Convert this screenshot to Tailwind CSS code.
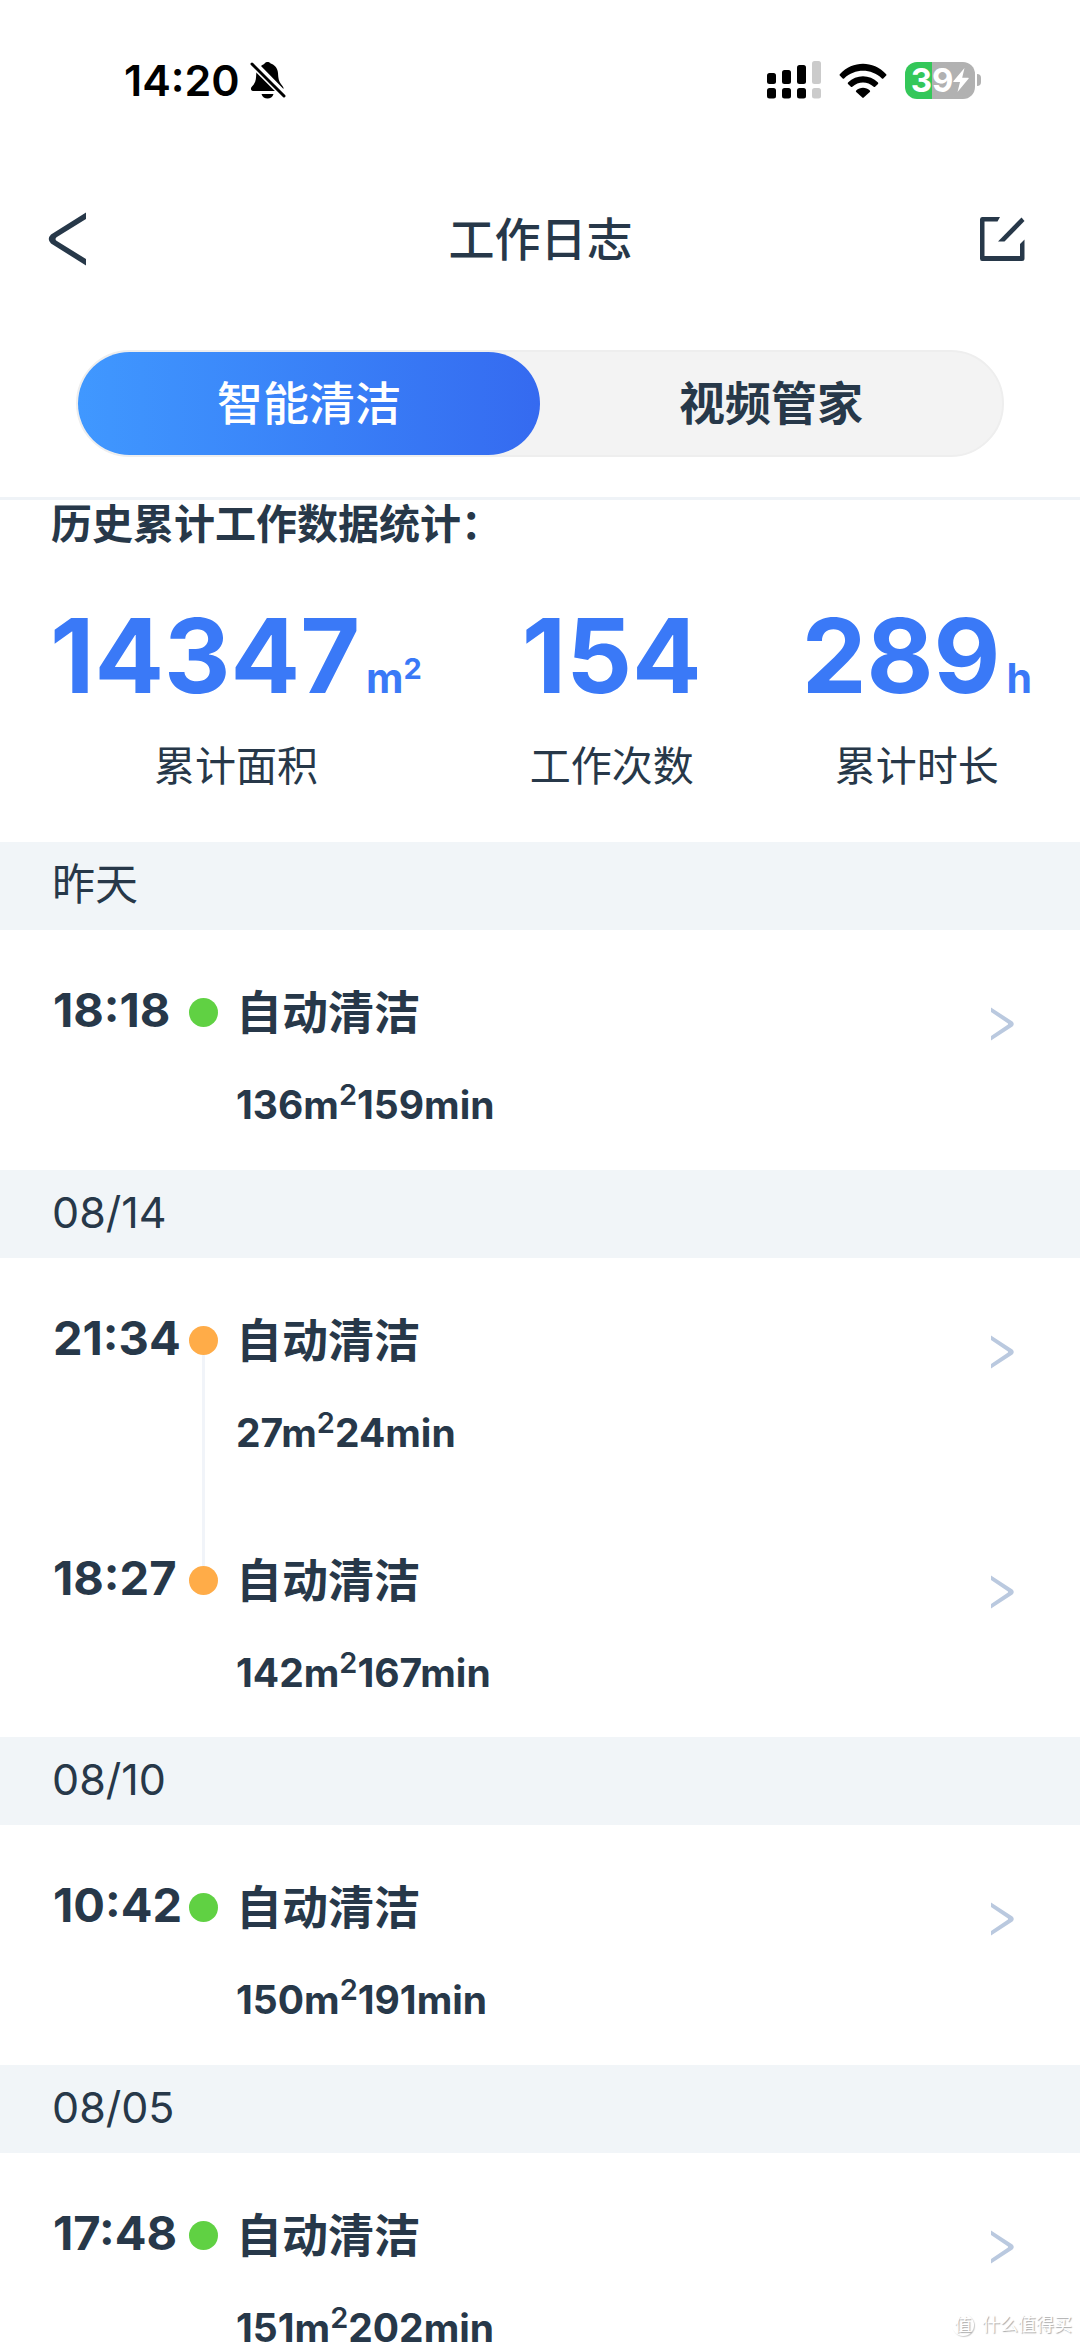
<!DOCTYPE html>
<html lang="zh-CN">
<head>
    <meta charset="UTF-8" />
    <meta name="viewport" content="width=device-width, initial-scale=1.0"/>
    <title>工作日志</title>
    <script src="https://cdn.jsdelivr.net/npm/@tailwindcss/browser@4"></script>
</head>
<body class="bg-white font-['Inter','Noto_Sans_CJK_SC',sans-serif] text-[#273849]">

    <div class="relative flex h-screen flex-col overflow-hidden">

        <!-- Barra de estado -->
        <div class="flex h-40 shrink-0 items-center justify-between pl-[124px] pr-[99px] text-black">
            <div class="flex items-center gap-[10px]">
                <span class="text-[43px] leading-[44px] font-semibold">14:20</span>
                <svg class="h-[38px] w-9" viewBox="0 0 36 38" fill="currentColor" aria-hidden="true">
                    <path d="M11 5C13 3.500 14 3.500 14.600 2.600C15.600 .6 19.600 .6 20.600 2.600C24.500 4 27.500 7 28 12C28.300 17 28.500 20.500 32.500 25Q33.800 26.500 33.500 28Z"/>
                    <path d="M6.500 9.500L27 30H3C.5 29.500 .4 27 2 25.500C6 21.500 6 18 6.300 12Z"/>
                    <path d="M11.500 33H23.500C22 39 13 39 11.500 33Z"/>
                    <path d="M2.500 3.500L33.500 34.500" stroke="#fff" stroke-width="6"/>
                    <path d="M2 3L34 35" stroke="currentColor" stroke-width="3" stroke-linecap="round"/>
                </svg>
            </div>
            <div class="flex items-center">
                <svg class="h-[38px] w-[54px]" viewBox="0 0 54 38" aria-hidden="true">
                    <rect x="0" y="12" width="9" height="11" rx="2.500"/>
                    <rect x="15" y="9" width="9" height="14" rx="2.500"/>
                    <rect x="30" y="4" width="9" height="19" rx="2.500"/>
                    <rect x="45" y="0" width="9" height="23" rx="2.500" fill="#cbcbcb"/>
                    <rect x="0" y="27" width="9" height="10.500" rx="2.500"/>
                    <rect x="15" y="27" width="9" height="10.500" rx="2.500"/>
                    <rect x="30" y="27" width="9" height="10.500" rx="2.500"/>
                    <rect x="45" y="27" width="9" height="10.500" rx="2.500" fill="#cbcbcb"/>
                </svg>
                <svg class="ml-[18px] h-[35px] w-12" viewBox="0 0 48 35" aria-hidden="true">
                    <path d="M.8 11.200C14-2.700 34-2.700 47.200 11.200Q47.800 12 47.200 12.600L44.300 15.400Q43.600 16 42.900 15.400C32 5.200 16 5.200 5.100 15.400Q4.400 16 3.700 15.400L.8 12.600Q.2 12 .8 11.200Z"/>
                    <path d="M9 19.500C17.500 11 30.500 11 39 19.500Q39.600 20.200 39 20.900L36.100 23.700Q35.400 24.300 34.700 23.700C28.500 18 19.500 18 13.300 23.700Q12.600 24.300 11.900 23.700L9 20.900Q8.400 20.200 9 19.500Z"/>
                    <path d="M17.200 27.400C21 23.700 27 23.700 30.800 27.400Q31.500 28.200 30.800 28.900L24.700 34.600Q24 35.200 23.300 34.600L17.200 28.900Q16.500 28.200 17.200 27.400Z"/>
                </svg>
                <div class="ml-[18px] flex items-center gap-[2px]">
                    <div class="flex h-[37px] w-[70px] items-center justify-center rounded-[12px] bg-linear-to-r from-[#34c759] from-[39%] to-[#b1b1b1] to-[39%] text-white">
                        <span class="text-[33px] leading-[37px] font-bold">39</span>
                        <svg class="h-6 w-4" viewBox="0 0 16 24" fill="currentColor" aria-hidden="true">
                            <path d="M11.500 0L.3 13.200Q0 14 .8 14H7L4.500 24L15.700 10.500Q16 9.800 15.200 9.800H9.200Z"/>
                        </svg>
                    </div>
                    <div class="h-3 w-1 rounded-r-full bg-[#b1b1b1]"></div>
                </div>
            </div>
        </div>

        <!-- Cabecera -->
        <header class="grid h-[158px] shrink-0 grid-cols-[1fr_auto_1fr] items-center pl-12 pr-[55px]">
            <button type="button" aria-label="返回" class="justify-self-start">
                <svg class="h-[54px] w-10" viewBox="0 0 40 54" fill="currentColor" aria-hidden="true">
                    <path d="M38 .5V7L8.500 25.200Q6.500 27 8.500 28.800L38 47V53.500L3 31.500Q-1.500 27 3 22.500Z"/>
                </svg>
            </button>
            <h1 class="pl-2 text-[46px] leading-[60px] font-medium">工作日志</h1>
            <button type="button" aria-label="编辑" class="justify-self-end">
                <svg class="h-[46px] w-[46px]" viewBox="0 0 46 46" fill="currentColor" aria-hidden="true">
                    <path d="M3 1H21L18.500 5.500H5.500V40H41V28L45.500 23.500V42.500Q45.500 45 43 45H3Q1 45 1 42.500V3.500Q1 1 3 1Z"/>
                    <path d="M42.500 1.500L45.500 5L25.500 25.500H19Z"/>
                </svg>
            </button>
        </header>

        <div class="shrink-0 border-b-[3px] border-[#eff3f7] px-[76px] pt-8 pb-10">
            <nav class="grid grid-cols-2 rounded-full border-2 border-[#eeeeee] bg-[#f3f3f3] text-[46px]">
                <button type="button" class="h-[103px] rounded-full bg-linear-to-r from-[#4098ff] to-[#356af0] font-medium text-white">智能清洁</button>
                <button type="button" class="h-[103px] rounded-full font-bold">视频管家</button>
            </nav>
        </div>

        <main class="min-h-0 grow overflow-hidden">
            <section class="h-[342px] pr-12 pl-[50px]">
                <h2 class="pl-px text-[41px] leading-[48px] font-bold">历史累计工作数据统计：</h2>
                <div class="mt-12 flex justify-between">
                    <div class="flex flex-col items-center">
                        <p class="flex items-baseline gap-[6px] text-[#3a79f7]">
                            <span class="text-[103px] leading-[120px] font-bold">14347</span>
                            <span class="text-[41px] font-bold">m<sup class="text-[29px]">2</sup></span>
                        </p>
                        <p class="mt-5 text-[41px] leading-[60px]">累计面积</p>
                    </div>
                    <div class="flex flex-col items-center">
                        <p class="text-[103px] leading-[120px] font-bold text-[#3a79f7]">154</p>
                        <p class="mt-5 text-[41px] leading-[60px]">工作次数</p>
                    </div>
                    <div class="flex flex-col items-center">
                        <p class="flex items-baseline gap-[6px] text-[#3a79f7]">
                            <span class="text-[103px] leading-[120px] font-bold">289</span>
                            <span class="text-[41px] font-bold">h</span>
                        </p>
                        <p class="mt-5 text-[41px] leading-[60px]">累计时长</p>
                    </div>
                </div>
            </section>

            <!-- Registros agrupados por día -->
            <section>
                <h3 class="bg-[#f1f5f8] pb-1 pl-[52px] text-[43px] leading-[84px] font-normal">昨天</h3>
                <a href="#" class="grid h-60 grid-cols-[136px_29px_1fr_auto] pl-[53px] pr-[66px] pt-[52px]">
                    <span class="text-[47px] leading-[56px] font-bold">18:18</span>
                    <span class="mt-4 size-[29px] rounded-full bg-[#60d143]"></span>
                    <span class="pl-[18px] font-bold">
                        <span class="block text-[46px] leading-[60px]">自动清洁</span>
                        <span class="mt-9 block text-[39px] leading-[54px]">136m<sup class="text-[29px] font-semibold">2</sup>159min</span>
                    </span>
                    <svg class="mt-[25px] h-[34px] w-[23px]" viewBox="0 0 23 34" fill="#bac9df" aria-hidden="true">
                        <path d="M0 .5L21.500 14.500Q24 17 21.500 19.500L0 33.500V29L17 17.500L17 16.500L0 5Z"/>
                    </svg>
                </a>
            </section>

            <section>
                <h3 class="bg-[#f1f5f8] pb-1 pl-[52px] text-[43px] leading-[84px] font-normal">08/14</h3>
                <a href="#" class="grid h-60 grid-cols-[136px_29px_1fr_auto] pl-[53px] pr-[66px] pt-[52px]">
                    <span class="text-[47px] leading-[56px] font-bold">21:34</span>
                    <span class="relative mt-4 size-[29px] rounded-full bg-[#ffac48]">
                        <span class="absolute top-full left-[13px] h-[211px] w-[3px] bg-[#f1f4f9]"></span>
                    </span>
                    <span class="pl-[18px] font-bold">
                        <span class="block text-[46px] leading-[60px]">自动清洁</span>
                        <span class="mt-9 block text-[39px] leading-[54px]">27m<sup class="text-[29px] font-semibold">2</sup>24min</span>
                    </span>
                    <svg class="mt-[25px] h-[34px] w-[23px]" viewBox="0 0 23 34" fill="#bac9df" aria-hidden="true">
                        <path d="M0 .5L21.500 14.500Q24 17 21.500 19.500L0 33.500V29L17 17.500L17 16.500L0 5Z"/>
                    </svg>
                </a>
                <a href="#" class="grid h-[239px] grid-cols-[136px_29px_1fr_auto] pl-[53px] pr-[66px] pt-[52px]">
                    <span class="text-[47px] leading-[56px] font-bold">18:27</span>
                    <span class="mt-4 size-[29px] rounded-full bg-[#ffac48]"></span>
                    <span class="pl-[18px] font-bold">
                        <span class="block text-[46px] leading-[60px]">自动清洁</span>
                        <span class="mt-9 block text-[39px] leading-[54px]">142m<sup class="text-[29px] font-semibold">2</sup>167min</span>
                    </span>
                    <svg class="mt-[25px] h-[34px] w-[23px]" viewBox="0 0 23 34" fill="#bac9df" aria-hidden="true">
                        <path d="M0 .5L21.500 14.500Q24 17 21.500 19.500L0 33.500V29L17 17.500L17 16.500L0 5Z"/>
                    </svg>
                </a>
            </section>

            <section>
                <h3 class="bg-[#f1f5f8] pb-1 pl-[52px] text-[43px] leading-[84px] font-normal">08/10</h3>
                <a href="#" class="grid h-60 grid-cols-[136px_29px_1fr_auto] pl-[53px] pr-[66px] pt-[52px]">
                    <span class="text-[47px] leading-[56px] font-bold">10:42</span>
                    <span class="mt-4 size-[29px] rounded-full bg-[#60d143]"></span>
                    <span class="pl-[18px] font-bold">
                        <span class="block text-[46px] leading-[60px]">自动清洁</span>
                        <span class="mt-9 block text-[39px] leading-[54px]">150m<sup class="text-[29px] font-semibold">2</sup>191min</span>
                    </span>
                    <svg class="mt-[25px] h-[34px] w-[23px]" viewBox="0 0 23 34" fill="#bac9df" aria-hidden="true">
                        <path d="M0 .5L21.500 14.500Q24 17 21.500 19.500L0 33.500V29L17 17.500L17 16.500L0 5Z"/>
                    </svg>
                </a>
            </section>

            <section>
                <h3 class="bg-[#f1f5f8] pb-1 pl-[52px] text-[43px] leading-[84px] font-normal">08/05</h3>
                <a href="#" class="grid h-60 grid-cols-[136px_29px_1fr_auto] pl-[53px] pr-[66px] pt-[52px]">
                    <span class="text-[47px] leading-[56px] font-bold">17:48</span>
                    <span class="mt-4 size-[29px] rounded-full bg-[#60d143]"></span>
                    <span class="pl-[18px] font-bold">
                        <span class="block text-[46px] leading-[60px]">自动清洁</span>
                        <span class="mt-9 block text-[39px] leading-[54px]">151m<sup class="text-[29px] font-semibold">2</sup>202min</span>
                    </span>
                    <svg class="mt-[25px] h-[34px] w-[23px]" viewBox="0 0 23 34" fill="#bac9df" aria-hidden="true">
                        <path d="M0 .5L21.500 14.500Q24 17 21.500 19.500L0 33.500V29L17 17.500L17 16.500L0 5Z"/>
                    </svg>
                </a>
            </section>
        </main>

        <!-- Marca de agua -->
        <div class="absolute right-2 bottom-[11px] flex items-center gap-2 text-white text-shadow-[1px_1px_1px_#aaaaaa]">
            <span class="flex size-[22px] items-center justify-center rounded-full text-[17px] leading-[22px] shadow-[1px_1px_1px_#cccccc]">值</span>
            <span class="text-[18px] leading-[22px]">什么值得买</span>
        </div>
    </div>
</body>
</html>
